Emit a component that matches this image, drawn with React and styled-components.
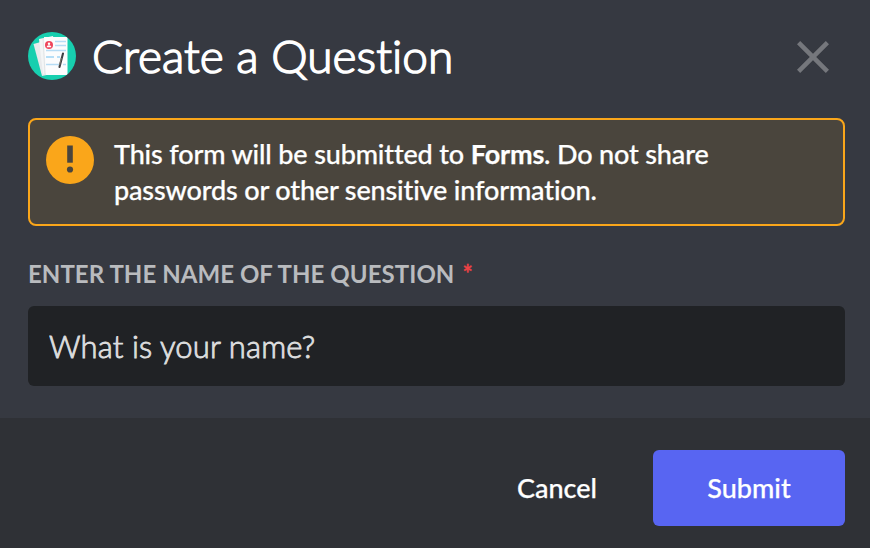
import React from 'react';
import styled, { createGlobalStyle } from 'styled-components';

const GlobalStyle = createGlobalStyle`
  * { box-sizing: border-box; }
  body { margin: 0; background: #36393f; }
`;

const Modal = styled.div`
  width: 870px;
  height: 548px;
  display: flex;
  flex-direction: column;
  background: #363941;
  color: #fff;
  font-family: Lato, 'Noto Sans', sans-serif;
  font-variant-ligatures: none;
  overflow: hidden;
`;

const Content = styled.main`
  flex: 1;
  padding: 28px 25px 0 28px;
`;

const Header = styled.header`
  display: flex;
  align-items: center;
  height: 56px;
`;

const Title = styled.h1`
  flex: 1;
  margin: 0 0 0 16px;
  font-size: 46px;
  line-height: 56px;
  font-weight: 300;
  letter-spacing: 0.05px;
  -webkit-text-stroke: 1.5px currentColor;
`;

const CloseButton = styled.button`
  display: flex;
  padding: 0;
  margin: 2px 15px 0 0;
  border: 0;
  background: none;
  color: #75777c;
`;

const Notice = styled.section`
  display: flex;
  align-items: flex-start;
  height: 108px;
  margin-top: 34px;
  padding: 16px;
  border: 2px solid #faa61a;
  border-radius: 8px;
  background: #4a453d;
`;

const NoticeText = styled.p`
  margin: 0 0 0 20px;
  font-size: 27px;
  line-height: 36px;
  font-weight: 500;
  letter-spacing: -0.15px;
  white-space: nowrap;
  -webkit-text-stroke: 0.25px currentColor;
`;

const Label = styled.label`
  display: flex;
  margin-top: 32px;
  height: 32px;
  color: #b9bbbe;
  font-size: 24px;
  line-height: 31px;
  font-weight: 700;
  letter-spacing: 0.06px;
  text-transform: uppercase;
`;

const Required = styled.span`
  margin-left: 8px;
  color: #ed4245;
  -webkit-text-stroke: 0.3px currentColor;
`;

const Input = styled.input`
  display: block;
  width: 100%;
  height: 80px;
  margin-top: 16px;
  padding: 0 21px;
  border: 0;
  border-radius: 6px;
  outline: 0;
  background: #202225;
  color: #dcddde;
  font: 300 31px Lato, 'Noto Sans', sans-serif;
  font-variant-ligatures: none;
  letter-spacing: 0.12px;
  -webkit-text-stroke: 0.9px currentColor;
`;

const Footer = styled.footer`
  display: flex;
  justify-content: flex-end;
  height: 130px;
  padding: 32px 25px 0;
  background: #2f3136;
`;

const Button = styled.button`
  width: 192px;
  height: 76px;
  padding: 0 0 2px;
  border: 0;
  border-radius: 6px;
  background: ${({ $primary }) => ($primary ? '#5865f2' : 'transparent')};
  color: #fff;
  font: 500 27px Lato, 'Noto Sans', sans-serif;
  -webkit-text-stroke: 0.25px currentColor;
`;

const AppIcon = () => (
  <svg width="48" height="48" viewBox="0 0 48 48" aria-hidden="true">
    <defs>
      <clipPath id="app-circle"><circle cx="24" cy="24" r="24" /></clipPath>
    </defs>
    <g clipPath="url(#app-circle)">
      <rect width="48" height="48" fill="#17cfaf" />
      <path d="M5.5 12 20 8 28 41 14 44z" fill="#e9eaec" />
      <path d="M11 7 25 4 31 41 15 42z" fill="#f4f5f6" />
      <path d="M15 6 17 42" stroke="#d9dcdf" strokeWidth=".7" />
      <path d="M16 5H39.5V43H18z" fill="#fcfcfd" />
      <circle cx="21" cy="13" r="4" fill="#ee455b" />
      <circle cx="21" cy="11.7" r="1.2" fill="#fff" />
      <path d="M18.6 15.2a2.4 2 0 0 1 4.8 0z" fill="#fff" />
      <path d="M27 9.5H38M27 13.5H38M18 18.5H38M18 32.5H31M35 32.5H38" stroke="#b6dcf5" strokeWidth="1.3" />
      <path d="M18 25H26M29 25H32" stroke="#9fd4f5" strokeWidth="1.5" />
      <path d="M35 21.5 31.5 35" stroke="#3d4044" strokeWidth="2.1" strokeLinecap="round" />
      <path d="M33.4 26 31.5 33" stroke="#8b8171" strokeWidth=".8" />
    </g>
  </svg>
);

const CloseIcon = () => (
  <svg width="34" height="34" viewBox="0 0 34 34" fill="none" aria-hidden="true">
    <path d="M2.6 2.6 31.4 31.4M31.4 2.6 2.6 31.4" stroke="currentColor" strokeWidth="4.5" />
  </svg>
);

const WarningIcon = () => (
  <svg width="48" height="48" viewBox="0 0 48 48" aria-hidden="true">
    <circle cx="24" cy="24" r="24" fill="#faa61a" />
    <path d="M21.2 9.5h5.6v17.2h-5.6z" fill="#4a453d" />
    <circle cx="24" cy="33.5" r="3.1" fill="#4a453d" />
  </svg>
);

export default function App() {
  return (
    <>
      <GlobalStyle />
      <Modal role="dialog" aria-label="Create a Question">
        <Content>
          <Header>
            <AppIcon />
            <Title>Create a Question</Title>
            <CloseButton aria-label="Close"><CloseIcon /></CloseButton>
          </Header>
          <Notice>
            <WarningIcon />
            <NoticeText>
              This form will be submitted to <b>Forms</b>. Do not share
              <br />
              passwords or other sensitive information.
            </NoticeText>
          </Notice>
          <Label htmlFor="question">
            Enter the name of the question<Required>*</Required>
          </Label>
          <Input id="question" defaultValue="What is your name?" />
        </Content>
        <Footer>
          <Button>Cancel</Button>
          <Button $primary>Submit</Button>
        </Footer>
      </Modal>
    </>
  );
}
